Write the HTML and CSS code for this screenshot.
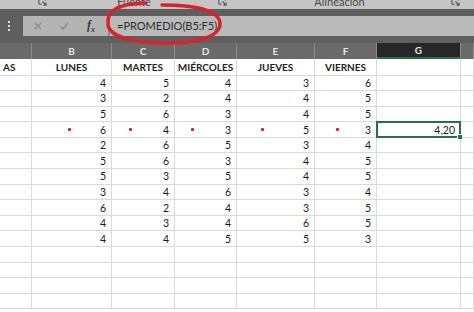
FILE: index.html
```html
<!DOCTYPE html>
<html lang="es">
<head>
    <meta charset="UTF-8">
    <meta name="viewport" content="width=device-width, initial-scale=1.0">
    <title>PROMEDIO</title>
    <link rel="stylesheet" href="styles.css">
</head>
<body>
    <!-- grupos de la cinta, cortados arriba -->
    <div class="ribbon">
        <div class="group group-clip">
            <span class="label"></span>
            <svg class="launcher" viewBox="0 0 10 10"><path d="M1 1h7M1 1v7M1 8h3M8 1v3M5 5l4 4M9 6v3H6" /></svg>
        </div>
        <div class="group group-font">
            <span class="label">Fuente</span>
            <svg class="launcher" viewBox="0 0 10 10"><path d="M1 1h7M1 1v7M1 8h3M8 1v3M5 5l4 4M9 6v3H6" /></svg>
        </div>
        <div class="group group-align">
            <span class="label">Alineación</span>
            <svg class="launcher" viewBox="0 0 10 10"><path d="M1 1h7M1 1v7M1 8h3M8 1v3M5 5l4 4M9 6v3H6" /></svg>
        </div>
    </div>

    <div class="formula-band">
        <div class="grip"><i></i><i></i><i></i></div>
        <div class="formula-tools">
            <svg class="tool" viewBox="0 0 10 10"><path d="M2 2l6 6M8 2l-6 6" /></svg>
            <svg class="tool" viewBox="0 0 10 10"><path d="M1.5 5.5l2.5 2.5 5-6" /></svg>
            <span class="fx">f<sub>x</sub></span>
        </div>
        <div class="formula-input">=PROMEDIO(B5:F5)</div>
    </div>

    <div class="sheet">
        <div class="row col-heads">
            <div class="head"></div>
            <div class="head">B</div>
            <div class="head">C</div>
            <div class="head">D</div>
            <div class="head">E</div>
            <div class="head">F</div>
            <div class="head active">G</div>
            <div class="head"></div>
        </div>
        <div class="row titles">
            <div class="cell first">AS</div>
            <div class="cell">LUNES</div>
            <div class="cell">MARTES</div>
            <div class="cell">MIÉRCOLES</div>
            <div class="cell">JUEVES</div>
            <div class="cell">VIERNES</div>
            <div class="cell"></div>
            <div class="cell"></div>
        </div>
        <div id="rows"></div>
    </div>

    <svg class="circle" viewBox="0 0 474 60">
        <path d="M162 5 C 194 5, 219 10, 220 23 C 221 37, 196 43, 165 43 C 133 43, 109 37, 108 24 C 107 12, 114 4, 146 3" />
    </svg>

    <script>
        // notas de la semana (B..F), la fila 4 es la seleccionada
        const notas = [
            [4, 5, 4, 3, 6],
            [3, 2, 4, 4, 5],
            [5, 6, 3, 4, 5],
            [6, 4, 3, 5, 3],
            [2, 6, 5, 3, 4],
            [5, 6, 3, 4, 5],
            [5, 3, 5, 4, 5],
            [3, 4, 6, 3, 4],
            [6, 2, 4, 3, 5],
            [4, 3, 4, 6, 5],
            [4, 4, 5, 5, 3]
        ];
        const rowsBox = document.getElementById('rows');

        function makeCell(text, cls) {
            const div = document.createElement('div');
            div.className = 'cell num' + (cls ? ' ' + cls : '');
            div.textContent = text;
            return div;
        }

        for (let i = 0; i < 15; i++) {
            const row = document.createElement('div');
            row.className = 'row';
            const valores = notas[i] || [];
            row.appendChild(makeCell('', 'first'));
            for (let c = 0; c < 5; c++) {
                const cell = makeCell(valores[c] !== undefined ? valores[c] : '');
                if (i === 3) {
                    // puntos rojos de la fila marcada
                    const dot = document.createElement('span');
                    dot.className = 'dot';
                    cell.prepend(dot);
                }
                row.appendChild(cell);
            }
            if (i === 3) {
                row.classList.add('marked');
                const sel = makeCell('4,20', 'selected');
                const handle = document.createElement('span');
                handle.className = 'handle';
                sel.appendChild(handle);
                row.appendChild(sel);
            } else {
                row.appendChild(makeCell(''));
            }
            row.appendChild(makeCell(''));
            rowsBox.appendChild(row);
        }
    </script>
</body>
</html>
```

FILE: styles.css
```css
/* base */
body {
    margin: 0;
    padding: 0;
    width: 474px;
    height: 312px;
    overflow: hidden;
    position: relative;
    background-color: #fff;
    font-family: "Lato", "Open Sans", sans-serif;
}

/* cinta */
.ribbon {
    display: flex;
    height: 9px;
    overflow: hidden;
    background-color: #c5c5c5;
}
.group {
    display: flex;
    align-items: flex-start;
}
.group .label {
    flex: 1;
    text-align: center;
    margin-top: -4px;
    font-size: 11px;
    line-height: 12px;
    color: #4a4a4a;
}
.group-clip {
    width: 50px;
}
.group-font {
    width: 178px;
}
.group-align {
    flex: 1;
}
.launcher {
    width: 9px;
    height: 9px;
    margin-top: -3px;
    fill: none;
    stroke: #555;
    stroke-width: 1.2;
}
.group-clip .launcher {
    margin-right: 3px;
}
.group-font .launcher {
    margin-right: 1px;
}
.group-align .launcher {
    margin-right: 14px;
}

/* barra de fórmulas */
.formula-band {
    display: flex;
    align-items: center;
    height: 34px;
    background-color: #5f5f5f;
}
.grip {
    width: 23px;
    display: flex;
    flex-direction: column;
    align-items: center;
    gap: 2px;
    margin-left: -3px;
    margin-right: 3px;
}
.grip i {
    width: 2px;
    height: 2px;
    background-color: #e0e0e0;
}
.formula-tools {
    display: flex;
    align-items: center;
    gap: 16px;
    width: 87px;
    height: 20px;
    box-sizing: border-box;
    padding-left: 10px;
    background-color: #b3b3b3;
    border-right: 2px solid #8f8f8f;
}
.tool {
    width: 10px;
    height: 10px;
    fill: none;
    stroke: #8a8a8a;
    stroke-width: 1.3;
}
.fx {
    font-family: "Liberation Serif", serif;
    font-style: italic;
    font-weight: bold;
    font-size: 12px;
    color: #3a3a3a;
    margin-left: 2px;
}
.fx sub {
    font-size: 8px;
}
.formula-input {
    flex: 1;
    height: 20px;
    line-height: 20px;
    padding-left: 7px;
    background-color: #bababa;
    font-size: 11px;
    color: #2e2e2e;
}

/* hoja */
.row {
    display: grid;
    grid-template-columns: 32px 80px 63px 62px 78px 62px 84px 1fr;
    height: 15.6px;
}
.col-heads {
    height: 16px;
    background-color: #6a6a6a;
}
.head {
    display: flex;
    align-items: center;
    justify-content: center;
    border-right: 1px solid #8c8c8c;
    font-size: 10px;
    font-weight: bold;
    color: #e4e4e4;
}
.head.active {
    background-color: #272727;
    border-bottom: 2px solid #217346;
}
.titles {
    height: 16.5px;
}
.cell {
    display: flex;
    align-items: center;
    justify-content: center;
    box-sizing: border-box;
    border-right: 1px solid #dadada;
    border-bottom: 1px solid #dadada;
    font-size: 10px;
    font-weight: bold;
    color: #1e1e1e;
    white-space: nowrap;
    overflow: hidden;
}
.titles .first {
    justify-content: flex-start;
    padding-left: 3px;
}
.cell.num {
    justify-content: flex-end;
    padding-right: 5px;
    font-weight: normal;
    font-size: 10.5px;
    color: #1a1a1a;
}
.dot {
    width: 2.5px;
    height: 2.5px;
    border-radius: 1px;
    background-color: #d0203a;
    margin-right: 29px;
}
.marked .cell:nth-child(3) .dot,
.marked .cell:nth-child(4) .dot {
    margin-right: 31px;
}
.marked .cell:nth-child(5) .dot {
    margin-right: 39px;
}
.marked .cell:nth-child(6) .dot {
    margin-right: 26px;
}
.cell.selected {
    position: relative;
    overflow: visible;
    border: 2px solid #217346;
    margin: -1px 0 0 -1px;
    height: calc(100% + 1px);
    padding-right: 4px;
}
.handle {
    position: absolute;
    right: -4px;
    bottom: -4px;
    width: 4px;
    height: 4px;
    background-color: #217346;
    border: 1px solid #fff;
}

/* círculo rojo a mano */
.circle {
    position: absolute;
    left: 0;
    top: 0;
    width: 474px;
    height: 60px;
    fill: none;
    stroke: #d8232a;
    stroke-width: 3.5;
    stroke-linecap: round;
}
```
